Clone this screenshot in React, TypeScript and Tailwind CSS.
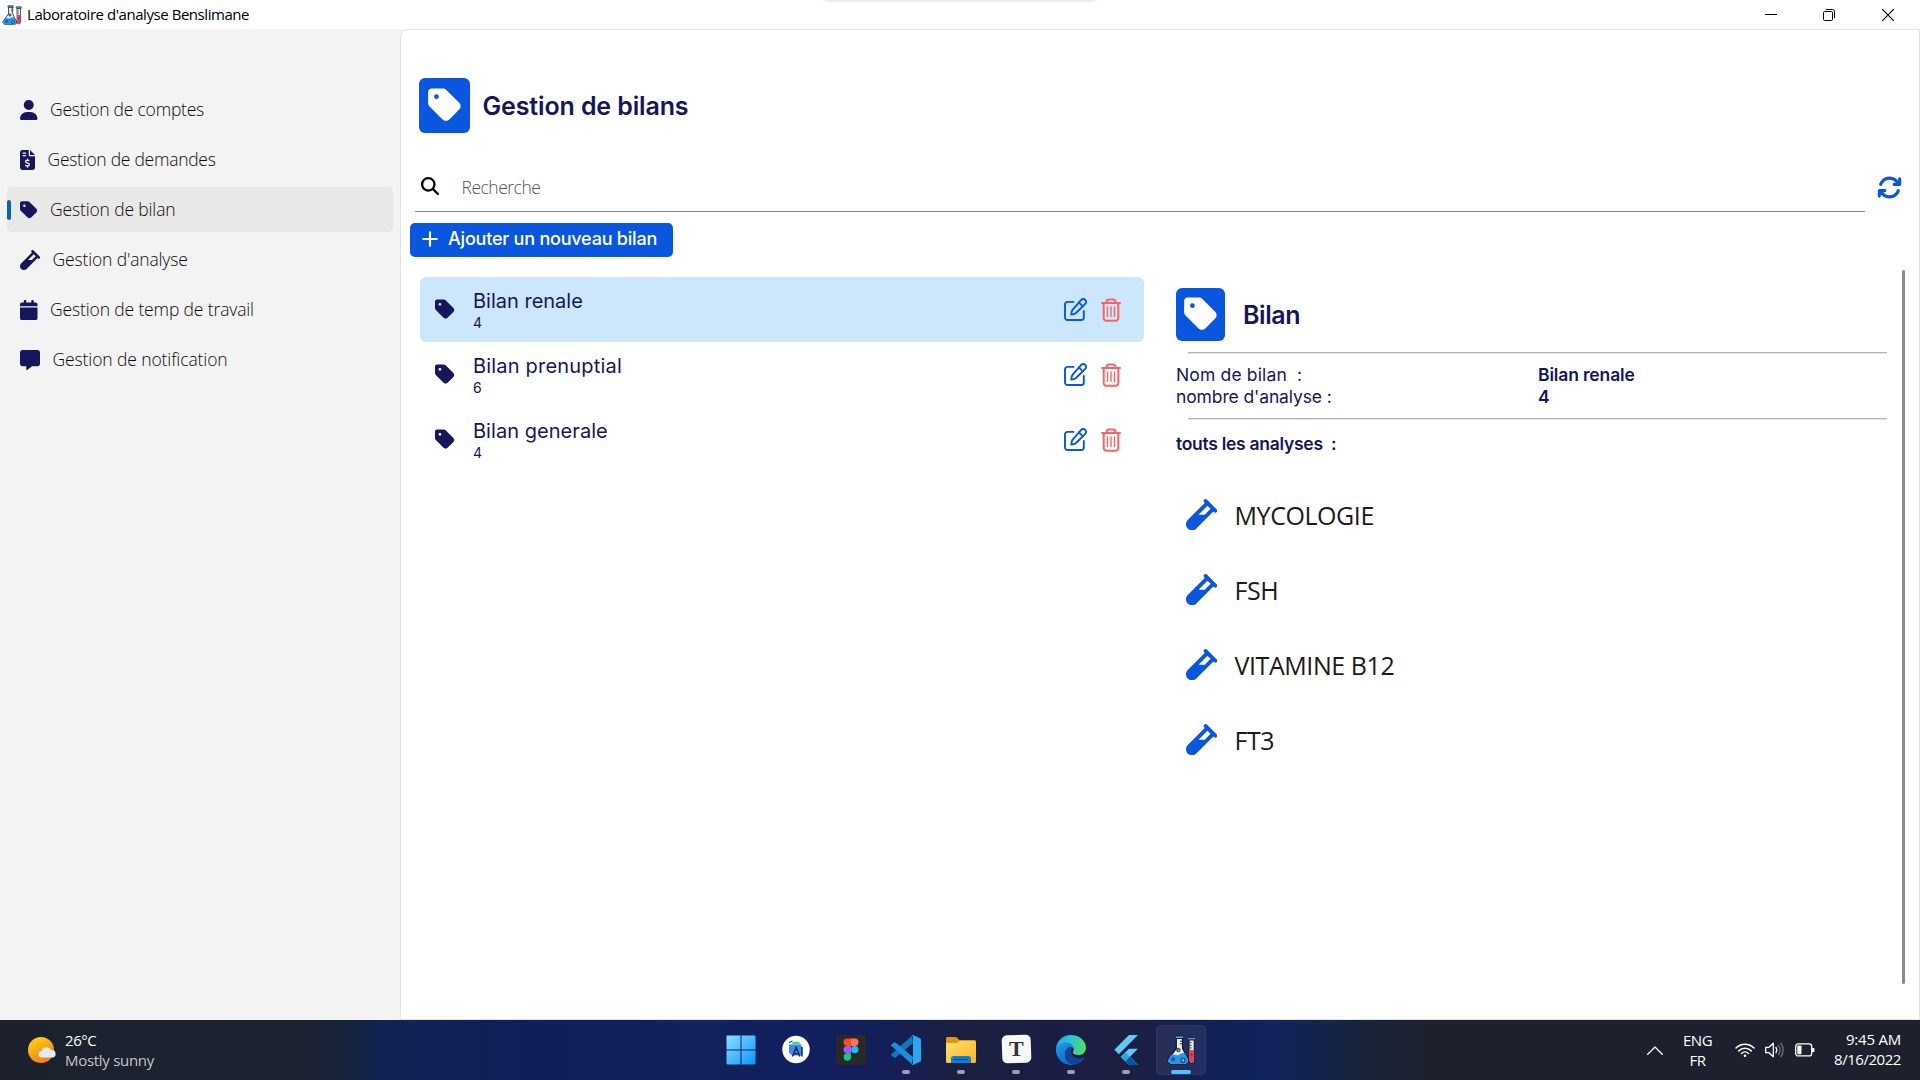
import type { ReactNode } from "react";
import type { IconType } from "react-icons";
import {
  FaUser,
  FaFileInvoiceDollar,
  FaTag,
  FaVial,
  FaCalendar,
  FaMessage,
  FaMagnifyingGlass,
  FaArrowsRotate,
} from "react-icons/fa6";

function LabIcon({ className }: { className: string }) {
  return (
    <svg viewBox="0 0 28 29" className={className}>
      <rect x="8" y="1" width="8" height="2.4" rx="0.6" fill="#5aa9e0" stroke="#101828" strokeWidth="0.8" />
      <path d="M9 3.4h6v9.6l5.2 10.2a3 3 0 0 1-2.7 4.8H3.8a3 3 0 0 1-2.7-4.4L9 13z" fill="#e9edf2" stroke="#101828" strokeWidth="1.1" />
      <path d="M3.6 19.5c2.6-1.6 5 .9 7.6-.2 2.400-1.400 4.200-2 6.300-1.200l3 5.500a3 3 0 0 1-2.900 3.900H3.800a2.800 2.800 0 0 1-2.300-4z" fill="#2196ee" />
      <path d="M12.500 6h2.500M12.500 8.500h2.500" stroke="#101828" strokeWidth="0.9" />
      <circle cx="11" cy="14.500" r="1.700" fill="#7b8794" stroke="#101828" strokeWidth="0.7" />
      <circle cx="6" cy="23.500" r="1.300" fill="none" stroke="#101828" strokeWidth="0.9" />
      <circle cx="15.500" cy="24.500" r="2" fill="#5bbcf5" stroke="#101828" strokeWidth="0.9" />
      <rect x="20" y="2.500" width="7.500" height="2.400" rx="0.600" fill="#5aa9e0" stroke="#101828" strokeWidth="0.800" />
      <path d="M21.300 4.900h5V25a2.500 2.500 0 0 1-5 0z" fill="#e9edf2" stroke="#101828" strokeWidth="1" />
      <path d="M21.600 14.500h4.400V25a2.200 2.200 0 0 1-4.400 0z" fill="#e63e54" />
      <path d="M21.800 7.500h2M21.800 10h2M21.800 12.500h2" stroke="#101828" strokeWidth="0.800" />
      <circle cx="23.800" cy="19" r="0.900" fill="#7d1428" />
    </svg>
  );
}

function TitleBar() {
  return (
    <header className="flex h-[29px] shrink-0 items-center bg-white">
      <LabIcon className="ml-[2px] h-[20px] w-[20px]" />
      <span className="ml-[5px] text-[15px] leading-none tracking-[-0.45px] text-black">
        Laboratoire d'analyse Benslimane
      </span>
      <svg viewBox="0 0 12 12" className="ml-auto h-3 w-3" fill="none" stroke="#000">
        <path d="M0 5.500h12" />
      </svg>
      <svg viewBox="0 0 12 12" className="ml-[46px] h-3 w-3" fill="none" stroke="#000">
        <rect x="0.500" y="2.500" width="9" height="9" rx="1" />
        <path d="M3 .5h6.500a2 2 0 0 1 2 2V9" />
      </svg>
      <svg viewBox="0 0 12 12" className="mr-[26px] ml-[47px] h-3 w-3" fill="none" stroke="#000" strokeWidth="1.100">
        <path d="M0 0l12 12M12 0L0 12" />
      </svg>
    </header>
  );
}

const navItems: { label: string; icon: IconType; size: string; tracking: string; active?: boolean }[] = [
  { label: "Gestion de comptes", icon: FaUser, size: "w-[17.5px]", tracking: "tracking-[-0.22px]" },
  { label: "Gestion de demandes", icon: FaFileInvoiceDollar, size: "w-[15px]", tracking: "tracking-[-0.27px]" },
  { label: "Gestion de bilan", icon: FaTag, size: "w-[17.5px]", tracking: "tracking-[-0.15px]", active: true },
  { label: "Gestion d'analyse", icon: FaVial, size: "w-[20px]", tracking: "tracking-[-0.15px]" },
  { label: "Gestion de temp de travail", icon: FaCalendar, size: "w-[17.5px]", tracking: "tracking-[-0.14px]" },
  { label: "Gestion de notification", icon: FaMessage, size: "w-[20px]", tracking: "tracking-[-0.11px]" },
];

function Sidebar() {
  return (
    <nav className="flex w-[400px] shrink-0 flex-col gap-[5px] bg-[#f3f3f3] pt-[58px] pr-[7px] pl-[7px]">
      {navItems.map(({ label, icon: Icon, size, tracking, active }) => (
        <div
          key={label}
          className={`flex h-[45px] items-center rounded-[5px] ${active ? "bg-[#e8e8e7]" : ""}`}
        >
          <span className={`h-5 w-[4px] rounded-full ${active ? "bg-[#0067b8]" : ""}`} />
          <Icon className={`ml-[9px] h-5 shrink-0 text-[#16165c] ${size}`} />
          <span className={`ml-[12.5px] text-[17.5px] leading-none font-light text-[#0c0c0c] ${tracking}`}>{label}</span>
        </div>
      ))}
    </nav>
  );
}

function TagTile({ className }: { className: string }) {
  return (
    <div className={`flex items-center justify-center rounded-[6px] bg-[#0a56df] ${className}`}>
      <FaTag className="-mt-[1px] h-[38px] w-[33.5px] text-white" />
    </div>
  );
}

function EditIcon() {
  return (
    <svg viewBox="0 0 23 23" className="h-[23px] w-[23px]" fill="none" stroke="#0a56df" strokeWidth="1.900" strokeLinecap="round" strokeLinejoin="round">
      <path d="M9.500 3.900H3.500A2.500 2.500 0 0 0 1 6.400v13.100A2.500 2.500 0 0 0 3.500 22h13.800a2.500 2.500 0 0 0 2.500-2.500v-6.500" />
      <path d="M17.200 1.900a2.800 2.800 0 0 1 4 0 2.800 2.800 0 0 1 0 4l-9.200 9.100c-1.300 1.100-3 1.400-4.800 1.500.1-1.800.5-3.500 1.500-4.800z" />
      <path d="M14.900 4.400l3.900 3.900" />
    </svg>
  );
}

function TrashIcon() {
  return (
    <svg viewBox="0 0 20 24" className="h-6 w-5" fill="none" stroke="#fb6464" strokeWidth="2" strokeLinecap="round" strokeLinejoin="round">
      <path d="M1 5h18M5.600 4.800V3.600A2.200 2.200 0 0 1 7.800 1.400h4.400a2.200 2.200 0 0 1 2.200 2.200V4.800" />
      <path d="M2.700 5.500v14.700a2.500 2.500 0 0 0 2.500 2.500h9.600a2.500 2.500 0 0 0 2.500-2.500V5.500" />
      <path d="M6.500 9v9.400M10 9v9.400M13.500 9v9.400" strokeWidth="1.400" />
    </svg>
  );
}

const bilans = [
  { name: "Bilan renale", count: 4, tracking: "tracking-normal", selected: true },
  { name: "Bilan prenuptial", count: 6, tracking: "tracking-[0.19px]" },
  { name: "Bilan generale", count: 4, tracking: "tracking-[0.05px]" },
];

function BilanList() {
  return (
    <div className="ml-[19px] w-[724px] pt-[7px]">
      {bilans.map(({ name, count, tracking, selected }) => (
        <div
          key={name}
          className={`flex h-[65px] items-center rounded-[6px] pr-[23px] pl-[15px] ${selected ? "bg-[#cce6fb]" : ""}`}
        >
          <FaTag className="h-[22.5px] w-[19.7px] text-[#16165c]" />
          <div className="ml-[18.3px] flex-1 pt-[2px] font-['Inter',sans-serif] text-[#16165c]">
            <div className={`text-[20px] leading-[25px] ${tracking}`}>{name}</div>
            <div className="text-[14px] leading-[18px]">{count}</div>
          </div>
          <EditIcon />
          <div className="ml-[14px]">
            <TrashIcon />
          </div>
        </div>
      ))}
    </div>
  );
}

const analyses = ["MYCOLOGIE", "FSH", "VITAMINE B12", "FT3"];

function Divider() {
  return <div className="ml-3 h-[2px] border-t border-[#b4b4b4] bg-[#e6e6e6]" />;
}

function BilanDetail() {
  return (
    <div className="ml-8 w-[711px] pt-[18px] font-['Inter',sans-serif] text-[17.5px] leading-[22px] text-[#16165c]">
      <div className="flex items-center">
        <TagTile className="h-[53px] w-[49px]" />
        <h2 className="ml-[18px] pt-[2px] text-[25px] leading-none font-semibold tracking-[-0.44px]">Bilan</h2>
      </div>
      <div className="mt-[11px] mb-[10px]">
        <Divider />
      </div>
      <div className="flex">
        <span className="w-[362px] tracking-[0.15px] whitespace-pre">Nom de bilan  :</span>
        <span className="font-semibold tracking-[-0.15px]">Bilan renale</span>
      </div>
      <div className="flex">
        <span className="w-[362px] tracking-[-0.12px]">nombre d'analyse :</span>
        <span className="font-semibold">4</span>
      </div>
      <div className="mt-[10px] mb-[13px]">
        <Divider />
      </div>
      <div className="font-semibold tracking-[-0.28px] whitespace-pre">touts les analyses  :</div>
      <div className="mt-[22px] font-['Open_Sans',sans-serif]">
        {analyses.map((name) => (
          <div key={name} className="flex h-[75px] items-center pl-[10px]">
            <FaVial className="h-[31.25px] w-[31.25px] text-[#0a56df]" />
            <span className="ml-[17.300px] pt-[2px] text-[25px] leading-none tracking-[-0.43px] text-[#1b1b1b]">{name}</span>
          </div>
        ))}
      </div>
    </div>
  );
}

function Main() {
  return (
    <main className="flex-1 rounded-tl-[8px] border border-[#e3e3e3] bg-white">
      <div className="mt-[48px] ml-[18px] flex items-center">
        <TagTile className="h-[55px] w-[51px]" />
        <h1 className="ml-[12.5px] pt-[2px] font-['Inter',sans-serif] text-[25px] leading-none font-semibold tracking-[-0.13px] text-[#16165c]">
          Gestion de bilans
        </h1>
      </div>
      <div className="mt-[27px] ml-[14px] flex items-center">
        <div className="flex h-[52px] w-[1450px] items-center border-b border-[#868686] pt-[2px] pl-[6px]">
          <FaMagnifyingGlass className="-mt-[1px] h-[18px] w-[18px] text-black" />
          <span className="ml-[22.500px] pt-[3px] text-[17.5px] leading-none font-light tracking-[-0.5px] text-[#555]">
            Recherche
          </span>
        </div>
        <FaArrowsRotate className="mt-[2px] ml-[12px] h-[25px] w-[25px] text-[#0a56df]" />
      </div>
      <button className="mt-[10.500px] ml-[9px] flex h-[34.500px] w-[262.500px] items-center rounded-[5px] bg-[#0a56df] text-white">
        <svg viewBox="0 0 16 16" className="-mt-[2px] ml-[12px] h-4 w-4" stroke="currentColor" strokeWidth="2.200" strokeLinecap="round">
          <path d="M8 1.300v13.400M1.300 8h13.400" />
        </svg>
        <span className="-mt-[1.500px] ml-[10px] font-['Inter',sans-serif] text-[18px] leading-none font-medium tracking-[-0.21px]">
          Ajouter un nouveau bilan
        </span>
      </button>
      <div className="mt-[13px] flex h-[714px]">
        <BilanList />
        <BilanDetail />
        <div className="ml-[15px] w-[3px] rounded-full bg-[#8c8c8c]" />
      </div>
    </main>
  );
}

function TaskSlot({ children, state }: { children: ReactNode; state?: "open" | "active" }) {
  return (
    <div
      className={`flex h-[50px] w-[50px] flex-col items-center rounded-[5px] border pt-[9px] ${
        state === "active" ? "border-white/5 bg-white/7" : "border-transparent"
      }`}
    >
      <div className="h-[30px]">{children}</div>
      {state === "open" && <span className="mt-[5px] h-1 w-2 rounded-full bg-[#9a9fb5]" />}
      {state === "active" && <span className="mt-[5px] h-1 w-5 rounded-full bg-[#4cc2ff]" />}
    </div>
  );
}

function WindowsLogo() {
  return (
    <svg viewBox="0 0 30 30" className="h-[30px] w-[30px]">
      <defs>
        <linearGradient id="win" x1="0" y1="0" x2="30" y2="30" gradientUnits="userSpaceOnUse">
          <stop stopColor="#8be0ff" />
          <stop offset="1" stopColor="#0a93ff" />
        </linearGradient>
      </defs>
      <path fill="url(#win)" d="M.5 1.500q0-1 1-1H14.500v14H.5zM15.500.5h13q1 0 1 1v13h-14zM.5 15.500h14v14h-13q-1 0-1-1zM15.500 15.500h14v13q0 1-1 1h-13z" />
    </svg>
  );
}

function AndroidStudioLogo() {
  return (
    <svg viewBox="0 0 30 30" className="h-[30px] w-[30px]">
      <circle cx="15" cy="14.500" r="13.700" fill="#fff" />
      <path d="M8 9.500h12l1 2V20.500H11l-3-3z" fill="#4285f4" />
      <path d="M10 9.500a5.300 4.500 0 0 1 10 0z" fill="#3ddc84" />
      <path d="M8 7.500l3.500-1.500" stroke="#1f3b4d" strokeWidth="1.200" />
      <path d="M11.500 21.500l3.700-9 3.700 9M12.800 18.800h5M21 12v9.500" fill="none" stroke="#10304a" strokeWidth="1.500" />
    </svg>
  );
}

function FigmaLogo() {
  return (
    <svg viewBox="0 0 30 30" className="h-[30px] w-[30px]">
      <rect width="30" height="30" rx="2.500" fill="#292929" />
      <path d="M15 3.500h-3.800a3.700 3.700 0 0 0 0 7.400H15z" fill="#f24e1e" />
      <path d="M15 3.500h3.800a3.700 3.700 0 0 1 0 7.400H15z" fill="#ff7262" />
      <path d="M15 10.900h-3.800a3.700 3.700 0 0 0 0 7.400H15z" fill="#a259ff" />
      <circle cx="18.800" cy="14.600" r="3.700" fill="#1abcfe" />
      <path d="M15 18.300h-3.800a3.700 3.700 0 1 0 3.800 3.700z" fill="#0acf83" />
    </svg>
  );
}

function VsCodeLogo() {
  return (
    <svg viewBox="0 0 30 30" className="h-[30px] w-[30px]">
      <path d="M22 8L4.500 22.500q-.8.700-1.600 0L.5 20.600q-.8-.8 0-1.600L21 .7z" fill="#0f78bd" />
      <path d="M22 22L4.500 7.500q-.8-.7-1.600 0L.5 9.400q-.8.800 0 1.600L21 29.300z" fill="#1c8fd6" />
      <path d="M22 0l7 3.200q1 .5 1 1.600v20.400q0 1.100-1 1.600L22 30q-.8.200-1.400-.4Q22 29.500 22 28V2Q22 .5 20.600.4 21.200-.2 22 0z" fill="#2ba6f2" />
    </svg>
  );
}

function ExplorerLogo() {
  return (
    <svg viewBox="0 0 30 30" className="h-[30px] w-[30px]">
      <defs>
        <linearGradient id="folder" x1="0" y1="0" x2="1" y2="1">
          <stop stopColor="#ffdf72" />
          <stop offset="1" stopColor="#f8b51d" />
        </linearGradient>
      </defs>
      <path d="M0 3.500Q0 2 1.500 2h8q1 0 1.800.8L13.300 5H28.500Q30 5 30 6.500V14H0z" fill="#dd9a0c" />
      <path d="M0 8h11l2-2h15.500Q30 6 30 7.500v19q0 1.500-1.500 1.500h-27Q0 28 0 26.500z" fill="url(#folder)" />
      <path d="M5 28v-4.500q0-2.500 2.500-2.500h15q2.500 0 2.500 2.500V28z" fill="#0f7fd6" />
      <path d="M8.500 24.500h13" stroke="#0a4f9a" strokeWidth="1.300" strokeLinecap="round" />
    </svg>
  );
}

function TyporaLogo() {
  return (
    <div className="flex h-[28px] w-[29px] -rotate-2 items-center justify-center rounded-[5px] bg-[#f8f8f8]">
      <span className="rotate-2 font-['Liberation_Serif',serif] text-[22px] leading-none font-bold text-[#333]">T</span>
    </div>
  );
}

function EdgeLogo() {
  return (
    <svg viewBox="0 0 30 30" className="h-[30px] w-[30px]">
      <defs>
        <linearGradient id="edgeTop" x1="0" y1="8" x2="30" y2="14" gradientUnits="userSpaceOnUse">
          <stop stopColor="#28a8e8" />
          <stop offset="0.500" stopColor="#2fc6cf" />
          <stop offset="1" stopColor="#5bdc4c" />
        </linearGradient>
        <linearGradient id="edgeLeft" x1="0" y1="8" x2="16" y2="30" gradientUnits="userSpaceOnUse">
          <stop stopColor="#1f9de8" />
          <stop offset="1" stopColor="#0f5fc0" />
        </linearGradient>
      </defs>
      <path d="M0 14C.4 6 7 0 15 0c9 0 15 6.500 15 12.500 0 5-3.500 7.500-7.500 7.500-3.500 0-5.700-1.200-5.700-2.500 0-.8 1-1.200 1-3C17.800 11.500 15 9 11 9 5.500 9 1 11 0 14z" fill="url(#edgeTop)" />
      <path d="M0 14C1 10 5.500 7.500 10 7.500c5 0 7.800 3.300 7.800 7-.5-1.400-1.700-2.300-3.300-2.300-3 0-5.500 3-5.500 7 0 5.500 4.200 9.800 9.500 10.300A15 15 0 0 1 0 14z" fill="url(#edgeLeft)" />
      <path d="M9.500 17C8.500 23 13 29.500 18.500 29.500c4 0 8-3 9.700-6.200.3-.7-.2-1-.8-.7-5 2.200-12.400 0-12.400-6 0-1.500.5-2.800 1.300-3.800-3-1.300-6.200.7-6.800 4.200z" fill="#10469a" />
    </svg>
  );
}

function FlutterLogo() {
  return (
    <svg viewBox="0 0 30 30" className="h-[30px] w-[30px]">
      <path d="M18 0h9L7.800 19.300 3.300 14.800z" fill="#5fc9f8" />
      <path d="M18 13.800h9L19.200 21.600 27 30h-9l-8.300-8.300z" fill="#5fc9f8" />
      <path d="M14.300 26.200l4.600-4.600L27 30h-9z" fill="#01579b" />
      <path d="M9.700 21.700l4.600-4.500 4.500 4.500-4.500 4.500z" fill="#2ba4e6" />
    </svg>
  );
}

function Taskbar() {
  return (
    <footer className="flex h-[60px] shrink-0 items-center bg-[linear-gradient(90deg,#1c212d_0px,#1b2230_300px,#182338_335px,#102353_385px,#101e5a_560px,#12225a_700px,#111f60_800px,#141f58_890px,#1b1f3f_960px,#1a1e46_1060px,#1c1f40_1120px,#122055_1200px,#10235c_1270px,#182338_1370px,#1c212d_1430px)] text-[15px] leading-5 text-white">
      <div className="flex w-[716px] items-center">
        <svg viewBox="0 0 28 26" className="ml-7 h-[26px] w-[28px]">
          <defs>
            <linearGradient id="sun" x1="0.200" y1="0" x2="0.700" y2="1">
              <stop stopColor="#ffd21a" />
              <stop offset="1" stopColor="#f07c12" />
            </linearGradient>
          </defs>
          <circle cx="13" cy="13" r="13" fill="url(#sun)" />
          <path d="M14 20.500a3.300 3.300 0 0 1-.3-6.600A5 5 0 0 1 23 13a3.800 3.800 0 0 1 1.500 7.500z" fill="#e3ebf8" />
        </svg>
        <div className="ml-[9px]">
          <div className="tracking-[-0.45px]">26°C</div>
          <div className="tracking-[-0.29px] text-[#c4c6ca]">Mostly sunny</div>
        </div>
      </div>
      <div className="flex gap-[5px]">
        <TaskSlot><WindowsLogo /></TaskSlot>
        <TaskSlot><AndroidStudioLogo /></TaskSlot>
        <TaskSlot><FigmaLogo /></TaskSlot>
        <TaskSlot state="open"><VsCodeLogo /></TaskSlot>
        <TaskSlot state="open"><ExplorerLogo /></TaskSlot>
        <TaskSlot state="open"><TyporaLogo /></TaskSlot>
        <TaskSlot state="open"><EdgeLogo /></TaskSlot>
        <TaskSlot state="open"><FlutterLogo /></TaskSlot>
        <TaskSlot state="active"><LabIcon className="h-[30px] w-[29px]" /></TaskSlot>
      </div>
      <div className="mr-[19px] ml-auto flex items-center">
        <svg viewBox="0 0 16 9" className="h-[9px] w-4" fill="none" stroke="#fff" strokeWidth="1.300" strokeLinecap="round" strokeLinejoin="round">
          <path d="M.7 8.300L8 1l7.300 7.300" />
        </svg>
        <div className="ml-5 w-[29px] text-center tracking-[-0.5px]">
          <div>ENG</div>
          <div>FR</div>
        </div>
        <svg viewBox="0 0 20 16" className="ml-[23px] h-4 w-5" fill="none" stroke="#fff" strokeWidth="1.500" strokeLinecap="round">
          <path d="M1 6a12.700 12.700 0 0 1 18 0M3.800 8.900a8.800 8.800 0 0 1 12.400 0M6.500 11.500a5 5 0 0 1 7 0" />
          <circle cx="10" cy="13.700" r="1.300" fill="#fff" stroke="none" />
        </svg>
        <svg viewBox="0 0 20 18" className="ml-[10px] h-[18px] w-5" fill="none" stroke="#fff" strokeWidth="1.300" strokeLinecap="round" strokeLinejoin="round">
          <path d="M.7 6.300h3.300l4.300-4v13.400l-4.300-4H.7zM11 6.300q1.600 2.700 0 5.400" />
          <path d="M13.500 4.300q3 4.700 0 9.400M16 2.300q4.300 6.700 0 13.400" stroke="#6b707a" />
        </svg>
        <svg viewBox="0 0 20 14" className="ml-[10px] h-[14px] w-5" fill="none" stroke="#fff" strokeWidth="1.300">
          <rect x="0.700" y="0.900" width="16" height="12" rx="2.500" />
          <rect x="2.300" y="2.600" width="4.200" height="8.600" rx="0.800" fill="#fff" stroke="none" />
          <path d="M17 5h1.800q.6 0 .6.600v2.800q0 .6-.6.600H17z" fill="#fff" stroke="none" />
        </svg>
        <div className="ml-[18px] w-[68px] pb-[2px] text-right">
          <div className="tracking-[-0.22px]">9:45 AM</div>
          <div className="tracking-[-0.45px]">8/16/2022</div>
        </div>
      </div>
    </footer>
  );
}

export default function App() {
  return (
    <div className="relative flex h-[1080px] w-[1920px] flex-col overflow-hidden bg-white font-['Open_Sans','Noto_Sans',sans-serif]">
      <div className="absolute -top-5 left-[822px] h-5 w-[276px] rounded-md shadow-[0_0_4px_rgba(0,0,0,0.2)]" />
      <TitleBar />
      <div className="flex flex-1 bg-[#f3f3f3]">
        <Sidebar />
        <Main />
      </div>
      <Taskbar />
    </div>
  );
}
